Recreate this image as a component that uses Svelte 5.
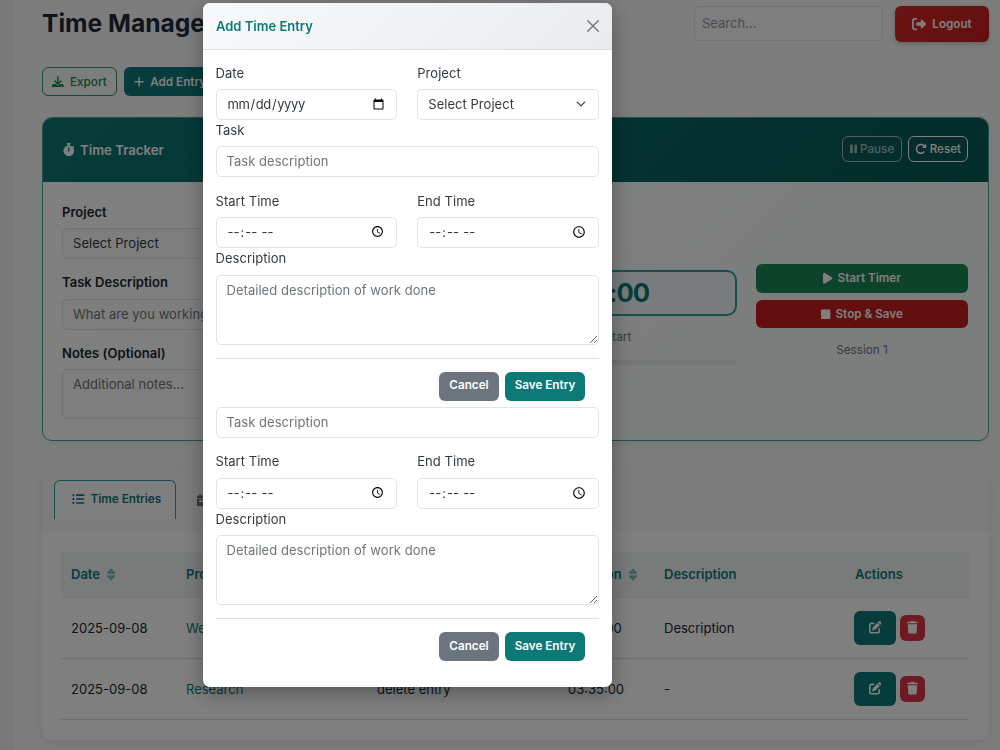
<script lang="ts">
  interface TimeEntry {
    date: string;
    project: string;
    task: string;
    duration: string;
    description: string;
  }

  interface Column {
    label: string;
    sortable: boolean;
  }

  const columns: Column[] = [
    { label: 'Date', sortable: true },
    { label: 'Project', sortable: true },
    { label: 'Task', sortable: true },
    { label: 'Duration', sortable: true },
    { label: 'Description', sortable: false },
    { label: 'Actions', sortable: false }
  ];

  const entries: TimeEntry[] = [
    { date: '2025-09-08', project: 'Website', task: 'Task', duration: '01:00:00', description: 'Description' },
    { date: '2025-09-08', project: 'Research', task: 'delete entry', duration: '03:35:00', description: '-' }
  ];

  // Icon outlines: viewBox width (height is always 512) and path
  const icons: Record<string, { w: number; d: string }> = {
    download: { w: 512, d: 'M288 32c0-17.7-14.3-32-32-32s-32 14.3-32 32V274.7l-73.4-73.4c-12.5-12.5-32.8-12.5-45.3 0s-12.5 32.8 0 45.3l128 128c12.5 12.5 32.8 12.5 45.3 0l128-128c12.5-12.5 12.5-32.8 0-45.3s-32.8-12.5-45.3 0L288 274.7V32zM64 352c-35.3 0-64 28.7-64 64v32c0 35.3 28.7 64 64 64H448c35.3 0 64-28.7 64-64V416c0-35.3-28.7-64-64-64H346.5l-45.3 45.3c-25 25-65.5 25-90.5 0L165.5 352H64zm368 56a24 24 0 1 1 0 48 24 24 0 1 1 0-48z' },
    plus: { w: 448, d: 'M256 80c0-17.7-14.3-32-32-32s-32 14.3-32 32V224H48c-17.7 0-32 14.3-32 32s14.3 32 32 32H192V432c0 17.7 14.3 32 32 32s32-14.3 32-32V288H400c17.7 0 32-14.3 32-32s-14.3-32-32-32H256V80z' },
    stopwatch: { w: 448, d: 'M176 0c-17.7 0-32 14.3-32 32s14.3 32 32 32h16V98.4C92.3 113.8 16 200 16 304c0 114.9 93.1 208 208 208s208-93.1 208-208c0-41.8-12.3-80.7-33.5-113.2l24.1-24.1c12.5-12.5 12.5-32.8 0-45.3s-32.8-12.5-45.3 0L355.7 143c-28.1-23-62.2-38.8-99.7-44.6V64h16c17.7 0 32-14.3 32-32s-14.3-32-32-32H176zm72 192V320c0 13.3-10.7 24-24 24s-24-10.7-24-24V192c0-13.3 10.7-24 24-24s24 10.7 24 24z' },
    logout: { w: 512, d: 'M377.9 105.9L500.7 228.7c7.2 7.2 11.3 17.1 11.3 27.3s-4.1 20.1-11.3 27.3L377.9 406.1c-6.4 6.4-15 9.9-24 9.9c-18.7 0-33.9-15.2-33.9-33.9l0-62.1-128 0c-17.7 0-32-14.3-32-32l0-64c0-17.7 14.3-32 32-32l128 0 0-62.1c0-18.7 15.2-33.9 33.9-33.9c9 0 17.6 3.6 24 9.9zM160 96L96 96c-17.7 0-32 14.3-32 32l0 256c0 17.7 14.3 32 32 32l64 0c17.7 0 32 14.3 32 32s-14.3 32-32 32l-64 0c-53 0-96-43-96-96L0 128C0 75 43 32 96 32l64 0c17.7 0 32 14.3 32 32s-14.3 32-32 32z' },
    pause: { w: 320, d: 'M48 64C21.500 64 0 85.500 0 112V400c0 26.500 21.500 48 48 48H80c26.500 0 48-21.500 48-48V112c0-26.500-21.500-48-48-48H48zm192 0c-26.500 0-48 21.500-48 48V400c0 26.500 21.500 48 48 48h32c26.500 0 48-21.500 48-48V112c0-26.500-21.500-48-48-48H240z' },
    redo: { w: 512, d: 'M463.5 224H472c13.3 0 24-10.7 24-24V72c0-9.7-5.8-18.5-14.8-22.2s-19.3-1.7-26.2 5.2L413.4 96.6c-87.6-86.5-228.7-86.2-315.8 1c-87.5 87.5-87.5 229.3 0 316.8s229.3 87.5 316.8 0c12.5-12.5 12.5-32.8 0-45.3s-32.8-12.5-45.3 0c-62.5 62.5-163.8 62.5-226.3 0s-62.5-163.8 0-226.3c62.2-62.2 162.7-62.5 225.3-1L327 183c-6.9 6.9-8.9 17.2-5.2 26.2s12.5 14.8 22.2 14.8H463.5z' },
    play: { w: 384, d: 'M73 39c-14.8-9.1-33.4-9.4-48.5-.9S0 62.600 0 80V432c0 17.400 9.400 33.400 24.500 41.900s33.700 8.100 48.500-.9L361 297c14.300-8.700 23-24.200 23-41s-8.700-32.200-23-41L73 39z' },
    stop: { w: 384, d: 'M0 112C0 85.500 21.500 64 48 64H336c26.500 0 48 21.500 48 48V400c0 26.500-21.500 48-48 48H48c-26.500 0-48-21.500-48-48V112z' },
    list: { w: 512, d: 'M40 48H72a24 24 0 0 1 24 24v32a24 24 0 0 1-24 24H40a24 24 0 0 1-24-24V72a24 24 0 0 1 24-24zM192 56H480a32 32 0 0 1 0 64H192a32 32 0 0 1 0-64zM40 208H72a24 24 0 0 1 24 24v32a24 24 0 0 1-24 24H40a24 24 0 0 1-24-24V232a24 24 0 0 1 24-24zM192 216H480a32 32 0 0 1 0 64H192a32 32 0 0 1 0-64zM40 368H72a24 24 0 0 1 24 24v32a24 24 0 0 1-24 24H40a24 24 0 0 1-24-24V392a24 24 0 0 1 24-24zM192 376H480a32 32 0 0 1 0 64H192a32 32 0 0 1 0-64z' },
    calendar: { w: 448, d: 'M128 0c17.7 0 32 14.3 32 32V64H288V32c0-17.7 14.3-32 32-32s32 14.300 32 32V64h48c26.500 0 48 21.500 48 48v48H0V112C0 85.500 21.500 64 48 64H96V32c0-17.700 14.300-32 32-32zM0 192H448V464c0 26.500-21.500 48-48 48H48c-26.500 0-48-21.500-48-48V192zM80 272V320c0 9 7 16 16 16H352c9 0 16-7 16-16V272c0-9-7-16-16-16H96c-9 0-16 7-16 16z' },
    sort: { w: 320, d: 'M137.4 41.4c12.5-12.5 32.8-12.5 45.3 0l128 128c9.2 9.2 11.9 22.9 6.9 34.9s-16.6 19.8-29.6 19.8H32c-12.9 0-24.6-7.8-29.6-19.8s-2.2-25.7 6.900-34.900l128-128zm0 429.300l-128-128c-9.200-9.200-11.900-22.900-6.900-34.900s16.600-19.800 29.600-19.800H288c12.900 0 24.600 7.800 29.600 19.800s2.200 25.700-6.900 34.900l-128 128c-12.500 12.500-32.800 12.500-45.300 0z' },
    edit: { w: 512, d: 'M471.6 21.7c-21.9-21.9-57.3-21.9-79.2 0L362.3 51.7l97.9 97.9 30.1-30.1c21.9-21.9 21.9-57.3 0-79.2L471.6 21.7zm-299.2 220c-6.1 6.1-10.8 13.6-13.5 21.9l-29.6 88.8c-2.9 8.6-.6 18.1 5.8 24.6s15.9 8.7 24.6 5.8l88.8-29.6c8.2-2.7 15.7-7.4 21.9-13.5L437.7 172.3 339.7 74.3 172.4 241.7zM96 64C43 64 0 107 0 160V416c0 53 43 96 96 96H352c53 0 96-43 96-96V320c0-17.7-14.3-32-32-32s-32 14.3-32 32v96c0 17.7-14.3 32-32 32H96c-17.7 0-32-14.3-32-32V160c0-17.7 14.3-32 32-32h96c17.7 0 32-14.3 32-32s-14.3-32-32-32H96z' },
    trash: { w: 448, d: 'M135.2 17.7L128 32H32C14.3 32 0 46.3 0 64S14.3 96 32 96H416c17.7 0 32-14.3 32-32s-14.3-32-32-32H320l-7.2-14.3C307.4 6.8 296.3 0 284.2 0H163.8c-12.1 0-23.2 6.8-28.6 17.7zM416 128H32L53.2 467c1.6 25.3 22.6 45 47.9 45H346.9c25.3 0 46.3-19.7 47.9-45L416 128z' }
  };

  let showModal = $state(true);
</script>

{#snippet icon(name: string)}
  <svg class="icon" viewBox="0 0 {icons[name].w} 512" aria-hidden="true">
    <path d={icons[name].d} />
  </svg>
{/snippet}

<!-- Task / times / description block with its own footer -->
{#snippet entryFields()}
  <input class="control task" type="text" placeholder="Task description" />
  <div class="row">
    <div class="field">
      <span class="label">Start Time</span>
      <input class="control" type="time" />
    </div>
    <div class="field">
      <span class="label">End Time</span>
      <input class="control" type="time" />
    </div>
  </div>
  <span class="label">Description</span>
  <textarea class="control details" placeholder="Detailed description of work done"></textarea>
  <div class="modal-footer">
    <button class="btn secondary" onclick={() => (showModal = false)}>Cancel</button>
    <button class="btn primary">Save Entry</button>
  </div>
{/snippet}

<div class="page">
  <main>
    <header class="topbar">
      <h1>Time Management</h1>
      <input class="search" type="text" placeholder="Search..." />
      <button class="btn logout">{@render icon('logout')} Logout</button>
    </header>

    <div class="toolbar">
      <button class="btn export">{@render icon('download')} Export</button>
      <button class="btn primary add">{@render icon('plus')} Add Entry</button>
    </div>

    <section class="tracker">
      <div class="tracker-header">
        <h2>{@render icon('stopwatch')} Time Tracker</h2>
        <button class="btn outline" disabled>{@render icon('pause')} Pause</button>
        <button class="btn outline">{@render icon('redo')} Reset</button>
      </div>
      <div class="tracker-body">
        <div class="tracker-form">
          <span class="label strong">Project</span>
          <select class="control"><option>Select Project</option></select>
          <span class="label strong">Task Description</span>
          <input class="control" type="text" placeholder="What are you working on?" />
          <span class="label strong">Notes (Optional)</span>
          <textarea class="control notes" placeholder="Additional notes..."></textarea>
        </div>
        <div class="tracker-clock">
          <div class="clock">00:00:00</div>
          <div class="status">Ready to start</div>
          <div class="progress"></div>
        </div>
        <div class="tracker-actions">
          <button class="btn start">{@render icon('play')} Start Timer</button>
          <button class="btn stop">{@render icon('stop')} Stop &amp; Save</button>
          <div class="session">Session 1</div>
        </div>
      </div>
    </section>

    <section class="entries">
      <div class="tabs">
        <button class="tab active">{@render icon('list')} Time Entries</button>
        <button class="tab">{@render icon('calendar')} Timesheet</button>
      </div>
      <div class="table-wrap">
        <table>
          <thead>
            <tr>
              {#each columns as column}
                <th>
                  {column.label}
                  {#if column.sortable}<span class="sort">{@render icon('sort')}</span>{/if}
                </th>
              {/each}
            </tr>
          </thead>
          <tbody>
            {#each entries as entry}
              <tr>
                <td>{entry.date}</td>
                <td class="project">{entry.project}</td>
                <td>{entry.task}</td>
                <td>{entry.duration}</td>
                <td>{entry.description}</td>
                <td>
                  <div class="actions">
                    <button class="btn edit" aria-label="Edit">{@render icon('edit')}</button>
                    <button class="btn delete" aria-label="Delete">{@render icon('trash')}</button>
                  </div>
                </td>
              </tr>
            {/each}
          </tbody>
        </table>
      </div>
    </section>
  </main>
</div>

{#if showModal}
  <div class="backdrop">
    <div class="modal" role="dialog" aria-modal="true">
      <div class="modal-header">
        <h5>Add Time Entry</h5>
        <button class="close" aria-label="Close" onclick={() => (showModal = false)}>
          <svg viewBox="0 0 16 16"><path d="M2 2l12 12M14 2L2 14" /></svg>
        </button>
      </div>
      <div class="modal-body">
        <div class="row">
          <div class="field">
            <span class="label">Date</span>
            <input class="control" type="date" />
          </div>
          <div class="field">
            <span class="label">Project</span>
            <select class="control"><option>Select Project</option></select>
          </div>
        </div>
        <span class="label">Task</span>
        {@render entryFields()}
        {@render entryFields()}
      </div>
    </div>
  </div>
{/if}

<style>
  :global(body) {
    background: #f8faf9;
    overflow: hidden;
  }

  * {
    box-sizing: border-box;
  }

  .page,
  .backdrop {
    font-family: Inter, 'Liberation Sans', sans-serif;
    font-size: 13px;
    color: #212529;
  }

  .page {
    height: 750px;
    overflow: hidden;
    padding-left: 14px;
    background: #f0f5f3;
  }

  main {
    height: 750px;
    padding: 6px 11px 0 28px;
    background: linear-gradient(180deg, #fafafa, #f8f9f9);
  }

  h1,
  h2,
  h5 {
    margin: 0;
  }

  .icon {
    height: 1em;
    flex: none;
    fill: currentColor;
  }

  .btn {
    display: inline-flex;
    align-items: center;
    justify-content: center;
    border: 0;
    border-radius: 6px;
    font: 600 11.7px Inter, 'Liberation Sans', sans-serif;
    color: #fff;
    white-space: nowrap;
  }

  .primary {
    background: #0d7977;
  }

  .secondary {
    background: #6c757d;
  }

  .control {
    display: block;
    width: 100%;
    height: 31px;
    margin: 0;
    padding: 0 10px 1px;
    border: 1px solid #e0e5e8;
    border-radius: 5px;
    background: #fff;
    color: #343a40;
    font: 400 13px Inter, 'Liberation Sans', sans-serif;
    letter-spacing: 0.04px;
  }

  .control::placeholder {
    color: #6f7579;
  }

  .control[type='date'] {
    padding: 0 9px 0 10px;
    letter-spacing: -0.4px;
  }

  .control[type='time'] {
    padding: 0 9px 1px 10px;
    letter-spacing: -0.05px;
  }

  select.control {
    appearance: none;
    background: #fff url("data:image/svg+xml,%3Csvg xmlns='http://www.w3.org/2000/svg' viewBox='0 0 16 16'%3E%3Cpath fill='none' stroke='%23343a40' stroke-linecap='round' stroke-linejoin='round' stroke-width='2' d='m2 5 6 6 6-6'/%3E%3C/svg%3E") no-repeat right 12px center / 10px;
  }

  textarea.control {
    padding: 5px 10px;
    line-height: 18px;
  }

  .label {
    display: block;
    height: 20px;
    margin-bottom: 6.4px;
    line-height: 20px;
    color: #343a40;
    letter-spacing: 0.04px;
  }

  .strong {
    font-weight: 600;
    color: #212529;
  }

  /* Top bar */
  .topbar {
    display: flex;
    align-items: flex-start;
    height: 61px;
  }

  h1 {
    flex: 1;
    min-width: 0;
    font-size: 24.6px;
    font-weight: 700;
    line-height: 34px;
    color: #1e293b;
  }

  .search {
    width: 189px;
    height: 35px;
    margin-right: 12px;
    padding: 0 7px 1px;
    border: 1px solid #e2e4e8;
    border-radius: 5px;
    background: #fcfcfc;
    font: 400 13px Inter, 'Liberation Sans', sans-serif;
  }

  .search::placeholder {
    color: #9096a2;
  }

  .logout {
    width: 94px;
    height: 36px;
    gap: 6px;
    padding-bottom: 2px;
    background: linear-gradient(135deg, #d32626, #c81e1e);
    box-shadow: 0 2px 5px rgba(0, 0, 0, 0.2);
  }

  .logout .icon {
    font-size: 14px;
  }

  .toolbar {
    display: flex;
    gap: 7px;
    margin-bottom: 20.5px;
  }

  .toolbar .btn {
    height: 29px;
    gap: 6px;
  }

  .export {
    width: 75px;
    border: 1px solid #329464;
    background: transparent;
    color: #198754;
    font-weight: 500;
  }

  .add {
    padding: 0 10px;
  }

  /* Tracker card */
  .tracker {
    height: 324.5px;
    overflow: hidden;
    border: 1px solid #3aa29c;
    border-radius: 10px;
    background: linear-gradient(135deg, #fff, #f6faf9);
    box-shadow: 0 2px 6px rgba(0, 0, 0, 0.06);
  }

  .tracker-header {
    display: flex;
    align-items: center;
    gap: 6px;
    height: 64px;
    padding: 0 20px 1px 19.5px;
    background: linear-gradient(135deg, #0c7875, #055855);
  }

  h2 {
    display: flex;
    flex: 1;
    align-items: center;
    gap: 6px;
    padding-top: 1px;
    font-size: 13.2px;
    font-weight: 600;
    color: #fff;
  }

  .outline {
    width: 60px;
    height: 26px;
    gap: 3px;
    padding: 0;
    border: 1px solid #fff;
    background: transparent;
    font-weight: 500;
  }

  .outline:disabled {
    opacity: 0.6;
  }

  .tracker-body {
    display: grid;
    grid-template-columns: 366px 289px 212px;
    gap: 20px;
    align-items: start;
    height: 259px;
    padding: 20.5px 19px 0;
  }

  .tracker-form .control {
    margin-bottom: 13.1px;
    background-color: #fcfcfc;
  }

  .tracker-form .notes {
    height: 50px;
    margin-bottom: 0;
    resize: none;
  }

  .tracker-clock {
    padding-top: 68px;
  }

  .clock {
    height: 46px;
    border: 2px solid #2f9e98;
    border-radius: 10px;
    background: #f1f8f8;
    color: #0d7977;
    font-size: 25.7px;
    font-weight: 700;
    letter-spacing: -1px;
    line-height: 42px;
    text-align: center;
  }

  .status {
    margin: 12px 0 14px;
    font-size: 11.8px;
    line-height: 18px;
    text-align: center;
    color: #6c757d;
  }

  .progress {
    height: 6px;
    border-radius: 3px;
    background: #e9ecef;
  }

  .tracker-actions {
    display: flex;
    flex-direction: column;
    gap: 7px;
    margin: 0 1px 0 -1px;
    padding-top: 62px;
  }

  .tracker-actions .btn {
    height: 28.5px;
    gap: 5px;
    padding-bottom: 1px;
  }

  .tracker-actions .icon {
    font-size: 12.5px;
  }

  .start {
    background: #198754;
  }

  .stop {
    background: #c81e1e;
  }

  .session {
    margin-top: 6px;
    font-size: 11.7px;
    line-height: 18px;
    text-align: center;
    color: #6c757d;
  }

  /* Entries card */
  .entries {
    height: 270px;
    margin-top: 29px;
    overflow: hidden;
    border-radius: 10px;
    background: #fff;
    box-shadow: 0 2px 8px rgba(0, 0, 0, 0.08);
  }

  .tabs {
    display: flex;
    gap: 4px;
    height: 62px;
    padding: 10px 12px 13px;
    background: #f8f8f8;
  }

  .tab {
    display: flex;
    align-items: center;
    gap: 6px;
    padding: 0 16px;
    border: 1px solid transparent;
    border-bottom: 0;
    border-radius: 6px 6px 0 0;
    background: transparent;
    font: 600 11.7px Inter, 'Liberation Sans', sans-serif;
    color: #6c757d;
    white-space: nowrap;
  }

  .tab .icon {
    font-size: 12.5px;
  }

  .tab.active {
    width: 122px;
    padding: 0 0 2px 17px;
    border-color: #2f9e98;
    background: #fff;
    color: #0d7977;
  }

  .table-wrap {
    padding: 20px 20px 0 19px;
  }

  table {
    width: 100%;
    table-layout: fixed;
    border-collapse: collapse;
  }

  th,
  td {
    padding: 0 10px;
    border-bottom: 1px solid #dcdfe2;
    text-align: left;
    white-space: nowrap;
  }

  th {
    height: 45px;
    border-bottom-color: #e9ecef;
    background: #f3f4f4;
    font-weight: 600;
    color: #0d7977;
  }

  th:nth-child(1) {
    width: 115px;
  }

  th:nth-child(2),
  th:nth-child(3),
  th:nth-child(5) {
    width: 191px;
  }

  th:nth-child(4) {
    width: 96px;
  }

  .sort {
    margin-left: 4px;
    opacity: 0.5;
  }

  .sort .icon {
    height: 13px;
    vertical-align: -2px;
  }

  td {
    height: 61px;
  }

  .project {
    color: #0d7977;
  }

  .actions {
    display: flex;
    align-items: center;
    gap: 4px;
    margin-left: -1px;
  }

  .edit {
    width: 42px;
    height: 34px;
    background: #0d7977;
  }

  .delete {
    width: 25px;
    height: 26px;
    background: #dc3545;
  }

  .actions .icon {
    font-size: 12.5px;
  }

  /* Modal */
  .backdrop {
    position: fixed;
    inset: 0;
    padding: 3px 0 0 203px;
    background: rgba(0, 0, 0, 0.5);
  }

  .modal {
    width: 409px;
    height: 684px;
    overflow: hidden;
    border-radius: 7px;
    background: #fff;
    box-shadow: 0 6px 22px rgba(0, 0, 0, 0.32);
  }

  .modal-header {
    display: flex;
    align-items: center;
    justify-content: space-between;
    height: 47px;
    padding: 0 12px 0 13px;
    border-bottom: 1px solid #dbe0e2;
    background: linear-gradient(135deg, #f8f9fa, #e9ecef);
  }

  h5 {
    font-size: 13px;
    font-weight: 600;
    color: #0d7977;
  }

  .close {
    width: 14px;
    height: 14px;
    padding: 0;
    border: 0;
    background: transparent;
  }

  .close svg {
    display: block;
    width: 14px;
    fill: none;
    stroke: #6e7276;
    stroke-width: 1.6;
    stroke-linecap: round;
  }

  .modal-body {
    padding: 12.5px 13px 0 12.5px;
  }

  .row {
    display: grid;
    grid-template-columns: 1fr 1fr;
    gap: 20px;
  }

  .task {
    margin-bottom: 13.5px;
  }

  .details {
    height: 70px;
  }

  .modal-footer {
    display: flex;
    justify-content: flex-end;
    gap: 6px;
    margin: 13px 0 6.4px;
    padding: 13px 14px 0 0;
    border-top: 1px solid #dee2e6;
  }

  .modal-footer .btn {
    width: 80px;
    height: 29px;
    padding-bottom: 3px;
  }

  .modal-footer .secondary {
    width: 60px;
  }
</style>
